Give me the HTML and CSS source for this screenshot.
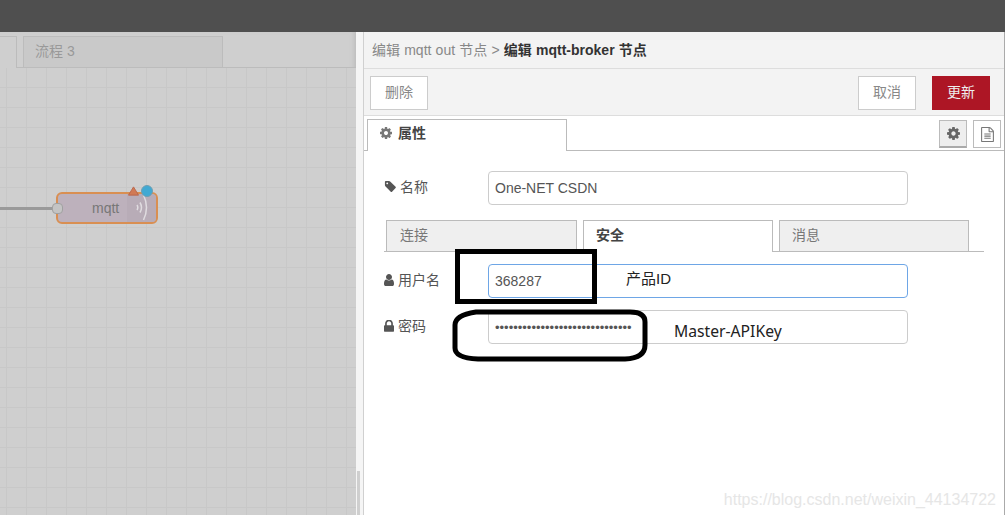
FILE: index.html
```html
<!DOCTYPE html>
<html lang="en">
<head>
    <meta charset="UTF-8">
    <meta name="viewport" content="width=device-width, initial-scale=1.0">
    <title>编辑 mqtt-broker 节点</title>
    <link rel="stylesheet" href="styles.css">
</head>
<body>
    <div class="topbar"></div>
    <div class="main">
        <div class="workspace">
            <div class="flow-tabs">
                <div class="flow-tab flow-tab-first"></div>
                <div class="flow-tab flow-tab-three">流程 3</div>
            </div>
            <div class="canvas">
                <div class="wire"></div>
                <div class="node">
                    <span class="node-label">mqtt</span>
                    <span class="node-icon">
                        <svg width="14" height="28" viewBox="0 0 14 28">
                            <path d="M2 11q1.600 2.500 0 5M5 8.500q3 5 0 10M8.500 1q6 12.500 0 25" fill="none" stroke="#e0dce0" stroke-width="1.500"/>
                        </svg>
                    </span>
                    <span class="node-port"></span>
                    <svg class="node-warn" width="11" height="10" viewBox="0 0 12 10">
                        <path d="M6 .5L11.500 9.500H.5z" fill="#d17a55" stroke="#b9654a"/>
                    </svg>
                    <span class="node-dot"></span>
                </div>
            </div>
        </div>
        <div class="divider"><div class="divider-thumb"></div></div>
        <div class="tray">
            <div class="tray-title">
                <span class="crumb">编辑 mqtt out 节点 &gt; </span><b>编辑 mqtt-broker 节点</b>
            </div>
            <div class="tray-toolbar">
                <button type="button" class="btn">删除</button>
                <div class="toolbar-right">
                    <button type="button" class="btn">取消</button>
                    <button type="button" class="btn btn-primary">更新</button>
                </div>
            </div>
            <div class="tray-body">
                <div class="tab-row">
                    <div class="tab-main">
                        <svg class="icon icon-gear" width="12" height="12" viewBox="128 128 1536 1536"><use href="#gear" width="1792" height="1792"/></svg>
                        属性
                    </div>
                    <div class="tab-tools">
                        <div class="tool tool-on">
                            <svg width="13" height="13" viewBox="128 128 1536 1536"><use href="#gear" width="1792" height="1792"/></svg>
                        </div>
                        <div class="tool">
                            <svg width="13" height="15" viewBox="128 0 1536 1792">
                                <path fill="#777" d="M1596 380q28 28 48 76t20 88v1152q0 40-28 68t-68 28h-1344q-40 0-68-28t-28-68v-1600q0-40 28-68t68-28h896q40 0 88 20t76 48zm-444-244v376h376q-10-29-22-41l-313-313q-12-12-41-22zm384 1528v-1024h-416q-40 0-68-28t-28-68v-416h-768v1536h1280zm-1024-864q0-14 9-23t23-9h704q14 0 23 9t9 23v64q0 14-9 23t-23 9h-704q-14 0-23-9t-9-23v-64zm736 224q14 0 23 9t9 23v64q0 14-9 23t-23 9h-704q-14 0-23-9t-9-23v-64q0-14 9-23t23-9h704zm0 256q14 0 23 9t9 23v64q0 14-9 23t-23 9h-704q-14 0-23-9t-9-23v-64q0-14 9-23t23-9h704z"/>
                            </svg>
                        </div>
                    </div>
                </div>
                <div class="form-row name-row">
                    <label class="label">
                        <svg class="icon" width="12" height="12" viewBox="0 128 1664 1664">
                            <path fill="#555" d="M576 448q0-53-37.500-90.500t-90.500-37.500-90.500 37.500-37.500 90.500 37.500 90.500 90.500 37.500 90.500-37.500 37.500-90.500zm1067 576q0 53-37 90l-491 492q-39 37-91 37-53 0-90-37l-715-716q-38-37-64.500-101t-26.500-117v-416q0-52 38-90t90-38h416q53 0 117 26.500t102 64.500l715 714q37 39 37 91z"/>
                        </svg>
                        名称
                    </label>
                    <input class="field" type="text" value="One-NET CSDN">
                </div>
                <div class="sub-tabs">
                    <div class="sub-tab sub-tab-first">连接</div>
                    <div class="sub-tab sub-tab-on">安全</div>
                    <div class="sub-tab">消息</div>
                </div>
                <div class="form-row user-row">
                    <label class="label">
                        <svg class="icon" width="10" height="12" viewBox="256 128 1280 1536">
                            <path fill="#555" d="M1536 1399q0 109-62.500 187t-150.500 78h-854q-88 0-150.500-78t-62.500-187q0-85 8.500-160.500t31.500-152 58.500-131 94-89 134.500-34.500q131 128 313 128t313-128q76 0 134.500 34.500t94 89 58.500 131 31.500 152 8.500 160.500zm-256-887q0 159-112.500 271.500t-271.500 112.500-271.500-112.500-112.500-271.500 112.500-271.500 271.500-112.500 271.500 112.500 112.500 271.500z"/>
                        </svg>
                        用户名
                    </label>
                    <input class="field field-focus" type="text" value="368287">
                </div>
                <div class="form-row pass-row">
                    <label class="label">
                        <svg class="icon" width="10" height="12" viewBox="320 192 1152 1344">
                            <path fill="#555" d="M640 768h512v-192q0-106-75-181t-181-75-181 75-75 181v192zm832 96v576q0 40-28 68t-68 28h-960q-40 0-68-28t-28-68v-576q0-40 28-68t68-28h32v-192q0-184 132-316t316-132 316 132 132 316v192h32q40 0 68 28t28 68z"/>
                        </svg>
                        密码
                    </label>
                    <input class="field field-pass" type="password" value="abcdefghijklmnopqrstuvwxyz1234">
                </div>
            </div>
        </div>
    </div>

    <!-- hand drawn marks on top of the screenshot -->
    <div class="mark-box"></div>
    <svg class="mark-oval" width="1005" height="515" viewBox="0 0 1005 515">
        <path d="M476 312H630Q645 312 645 322V345Q645 358 625 359H478Q455 358 455 348V325Q455 315 476 312Z" fill="none" stroke="#000" stroke-width="5"/>
    </svg>
    <div class="note note-id">产品ID</div>
    <div class="note note-key">Master-APIKey</div>
    <div class="watermark">https://blog.csdn.net/weixin_44134722</div>

    <svg class="defs" width="0" height="0">
        <symbol id="gear" viewBox="0 0 1792 1792">
            <path fill="currentColor" d="M1152 896q0-106-75-181t-181-75-181 75-75 181 75 181 181 75 181-75 75-181zm512-109v222q0 12-8 23t-20 13l-185 28q-19 54-39 91 35 50 107 138 10 12 10 25t-9 23q-27 37-99 108t-94 71q-12 0-26-9l-138-108q-44 23-91 38-16 136-29 186-7 28-36 28h-222q-14 0-24.500-8.500t-11.500-21.500l-28-184q-49-16-90-37l-141 107q-10 9-25 9-14 0-25-11-126-114-165-168-7-10-7-23 0-12 8-23 15-21 51-66.500t54-70.500q-27-50-41-99l-183-27q-13-2-21-12.500t-8-23.500v-222q0-12 8-23t19-13l186-28q14-46 39-92-40-57-107-138-10-12-10-24 0-10 9-23 26-36 98.500-107.500t94.500-71.500q13 0 26 10l138 107q44-23 91-38 16-136 29-186 7-28 36-28h222q14 0 24.500 8.500t11.500 21.500l28 184q49 16 90 37l142-107q9-9 24-9 13 0 25 10 129 119 165 170 7 8 7 22 0 12-8 23-15 21-51 66.500t-54 70.500q26 50 41 98l183 28q13 2 22 12.500t9 23.500z"/>
        </symbol>
    </svg>
</body>
</html>
```

FILE: styles.css
```css
* {
    box-sizing: border-box;
}
html, body {
    height: 100%;
}
body {
    margin: 0;
    overflow: hidden;
    position: relative;
    font-family: "Liberation Sans", "Noto Sans CJK SC", sans-serif;
    font-size: 14px;
    color: #555;
    background: #fff;
}
.topbar {
    height: 32px;
    background: #4f4f4f;
}
.main {
    display: flex;
    height: 483px;
}
.workspace {
    width: 356px;
    background: #cfcfcf;
    display: flex;
    flex-direction: column;
    box-shadow: inset -4px 0 4px -2px #bdbdbd;
}
.flow-tabs {
    display: flex;
    gap: 6px;
    height: 36px;
    padding-top: 4px;
    border-bottom: 1px solid #bcbcbc;
}
.flow-tab {
    height: 32px;
    border: 1px solid #bcbcbc;
    background: #c9c9c9;
    color: #999;
    line-height: 17px;
}
.flow-tab-first {
    width: 18px;
    margin-left: -1px;
    border-bottom: none;
    background: #cfcfcf;
}
.flow-tab-three {
    width: 200px;
    padding: 6px 11px;
}
.canvas {
    flex: 1;
    position: relative;
    background-color: #cfcfcf;
    background-image:
        linear-gradient(to right, #c8c8c8 1px, transparent 1px),
        linear-gradient(to bottom, #c8c8c8 1px, transparent 1px);
    background-size: 20px 20px;
    background-position: 6px 19px;
}
.wire {
    position: absolute;
    left: 0;
    top: 139px;
    width: 56px;
    height: 3px;
    background: #9a9a9a;
}
.node {
    position: absolute;
    left: 56px;
    top: 124px;
    width: 102px;
    height: 32px;
    border: 2px solid #d98f52;
    border-radius: 6px;
    background: #bdb1bc;
}
.node-label {
    position: absolute;
    left: 34px;
    top: 6px;
    line-height: 17px;
    color: #777;
}
.node-icon {
    position: absolute;
    right: 0;
    top: 0;
    width: 29px;
    height: 28px;
    padding-left: 8px;
    background: #b8acb7;
    border-radius: 0 4px 4px 0;
}
.node-icon svg {
    display: block;
}
.node-port {
    position: absolute;
    left: -6px;
    top: 9px;
    width: 11px;
    height: 11px;
    border: 1px solid #a0a0a0;
    border-radius: 4px;
    background: #c4c4c4;
}
.node-warn {
    position: absolute;
    left: 70px;
    top: -8px;
}
.node-dot {
    position: absolute;
    left: 83px;
    top: -9px;
    width: 12px;
    height: 12px;
    border-radius: 50%;
    border: 1px solid #6e9fb2;
    background: #41a9d3;
}
.divider {
    width: 8px;
    background: #f5f5f5;
    border-right: 1px solid #d0d0d0;
    position: relative;
}
.divider-thumb {
    position: absolute;
    left: 1px;
    bottom: 0;
    width: 3px;
    height: 44px;
    background: #cfcfcf;
}
.tray {
    flex: 1;
    display: flex;
    flex-direction: column;
    border-right: 1px solid #aaa;
}
.tray-title {
    height: 37px;
    padding: 10px 8px 0;
    background: #f3f3f3;
    border-bottom: 1px solid #ddd;
    line-height: 17px;
    word-spacing: 0.3px;
    color: #333;
}
.crumb {
    color: #888;
}
.tray-title b {
    font-weight: bold;
}
.tray-toolbar {
    height: 47px;
    display: flex;
    justify-content: space-between;
    padding: 7px 14px 0 6px;
    background: #f3f3f3;
    border-bottom: 1px solid #ddd;
}
.toolbar-right {
    display: flex;
    gap: 16px;
}
.btn {
    width: 58px;
    height: 34px;
    padding: 0 0 4px;
    border: 1px solid #ccc;
    background: #fff;
    color: #888;
    font: inherit;
}
.btn-primary {
    background: #ad1625;
    border-color: #ad1625;
    color: #eee;
}
.tray-body {
    flex: 1;
    position: relative;
}
.tab-row {
    height: 35px;
    display: flex;
    justify-content: space-between;
    padding: 3px 3px 0 3px;
    border-bottom: 1px solid #bbb;
}
.tab-main {
    width: 200px;
    height: 32px;
    padding: 5px 12px;
    border: 1px solid #bbb;
    border-bottom: none;
    background: #fff;
    font-weight: bold;
    line-height: 17px;
    color: #444;
}
.icon-gear {
    color: #777;
    margin-right: 2px;
}
.tab-tools {
    display: flex;
    gap: 6px;
    height: 30px;
    padding-top: 1px;
}
.tool {
    width: 28px;
    height: 28px;
    border: 1px solid #bbb;
    display: flex;
    align-items: center;
    justify-content: center;
    background: #fff;
}
.tool-on {
    background: #eee;
    color: #666;
    border-bottom: 2px solid #aaa;
}
.icon {
    vertical-align: -1px;
}
.form-row {
    display: flex;
    align-items: flex-start;
    padding-left: 20px;
}
.name-row {
    margin-top: 20px;
}
.user-row {
    margin-top: 12px;
}
.pass-row {
    margin-top: 12px;
}
.label {
    width: 104px;
    padding-top: 8px;
    line-height: 17px;
}
.field {
    width: 420px;
    height: 34px;
    padding: 0 6px;
    border: 1px solid #ccc;
    border-radius: 4px;
    font: inherit;
    color: #555;
    background: #fff;
    outline: none;
}
.field-focus {
    border-color: #6ea6e6;
}
.field-pass {
    font-size: 13px;
}
.sub-tabs {
    display: flex;
    gap: 6px;
    height: 32px;
    margin: 15px 20px 0;
    padding-left: 2px;
    border-bottom: 1px solid #bbb;
}
.sub-tab {
    width: 190px;
    height: 32px;
    padding: 6px 12px;
    border: 1px solid #bbb;
    background: #efefef;
    line-height: 17px;
    color: #777;
}
.sub-tab-first {
    width: 191px;
    padding-left: 13px;
}
.sub-tab-on {
    background: #fff;
    border-bottom: none;
    font-weight: bold;
    color: #444;
}
.mark-box {
    position: absolute;
    left: 455px;
    top: 249px;
    width: 142px;
    height: 55px;
    border: 5px solid #000;
}
.mark-oval {
    position: absolute;
    left: 0;
    top: 0;
}
.note {
    position: absolute;
    color: #222;
    font-size: 15px;
    line-height: 20px;
}
.note-id {
    left: 626px;
    top: 269px;
}
.note-key {
    left: 674px;
    top: 321px;
    font-family: "Noto Sans", sans-serif;
    font-size: 15.700px;
}
.watermark {
    position: absolute;
    right: 9px;
    bottom: 6px;
    font-size: 16px;
    color: #e6e6e6;
    white-space: nowrap;
}
.defs {
    position: absolute;
}
```
